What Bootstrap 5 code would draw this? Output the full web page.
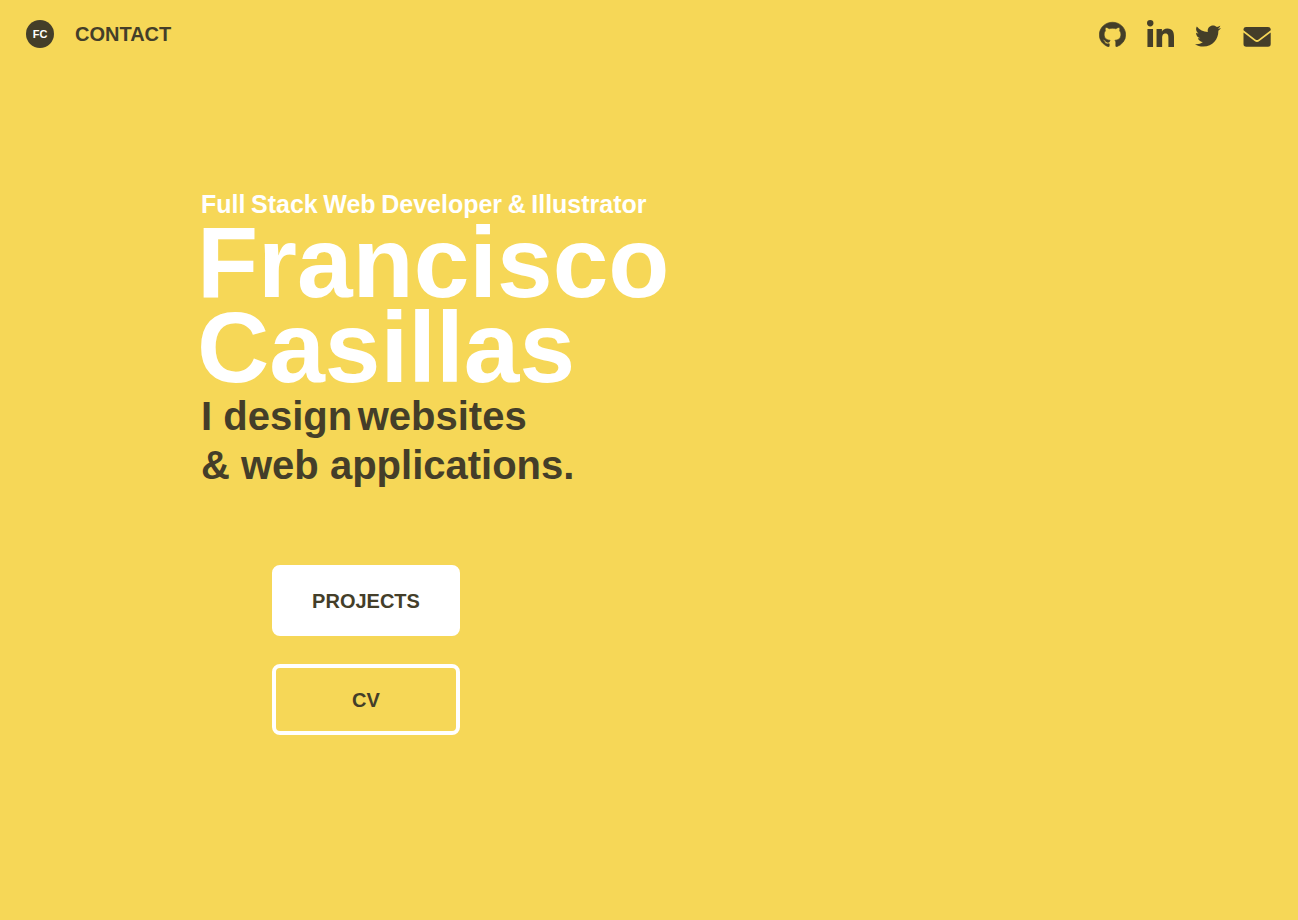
<!DOCTYPE html>
<html lang="en">
<head>
<meta charset="utf-8">
<meta name="viewport" content="width=device-width, initial-scale=1">
<title>Francisco Casillas</title>
<link href="https://cdn.jsdelivr.net/npm/bootstrap@5.3.0/dist/css/bootstrap.min.css" rel="stylesheet">
<style>
  :root { --sun: #f6d757; --ink: #443e29; }
  body { background: var(--sun); color: var(--ink); font-family: "Liberation Sans", Arial, sans-serif; font-weight: 700; }
  a { color: var(--ink); }
  .topbar { padding: 20px 26px; }
  .monogram { width: 28px; height: 28px; background: var(--ink); font-size: 11px; line-height: 28px; }
  .contact-link { font-size: 20px; line-height: 28px; margin-left: 21px; }
  .social { gap: 21px; height: 27px; padding-right: 1px; }
  .social svg { display: block; fill: currentColor; }
  .hero { padding: 121px 24px 40px 201px; }
  .role { font-size: 25px; line-height: 30px; }
  .hero-name { font-size: 100px; line-height: 85px; margin: 1px 0 2px -4px; }
  .pitch { font-size: 40px; line-height: 49px; }
  .thin-gap { font-size: 20px; line-height: 20px; }
  .actions { width: 188px; gap: 28px; margin: 75px 0 0 71px; }
  .actions .btn { --bs-btn-color: var(--ink); --bs-btn-border-color: #fff; --bs-btn-hover-border-color: #fff; --bs-btn-hover-bg: #fff; border-width: 4px; border-radius: 8px; font-size: 20px; font-weight: 700; line-height: 31px; padding: 17px 0 15px; }
  @media (max-width: 767px) {
    .hero { padding: 60px 24px; }
    .hero-name { font-size: 60px; line-height: 56px; }
    .pitch { font-size: 28px; line-height: 36px; }
    .actions { margin-left: 0; }
  }
</style>
</head>
<body>
<header class="topbar d-flex justify-content-between align-items-start">
  <nav class="d-flex align-items-center" aria-label="Main">
    <a href="#home" class="monogram rounded-circle text-white text-center text-decoration-none">FC</a>
    <a href="#contact" class="contact-link text-decoration-none">CONTACT</a>
  </nav>
  <div class="social d-flex align-items-end">
    <a href="#github" aria-label="GitHub"><svg width="27" height="26" viewBox="-.2 -.8 16.4 16.6" preserveAspectRatio="none"><path stroke="currentColor" stroke-width=".4" d="M8 0C3.58 0 0 3.58 0 8c0 3.54 2.29 6.53 5.47 7.59.4.07.55-.17.55-.38 0-.19-.01-.82-.01-1.49-2.01.37-2.53-.49-2.69-.94-.09-.23-.48-.94-.82-1.13-.28-.15-.68-.52-.01-.53.63-.01 1.08.58 1.23.82.72 1.21 1.87.87 2.33.66.07-.52.28-.87.51-1.07-1.78-.2-3.64-.89-3.64-3.95 0-.87.31-1.59.82-2.15-.08-.2-.36-1.02.08-2.12 0 0 .67-.21 2.2.82.64-.18 1.32-.27 2-.27s1.36.09 2 .27c1.53-1.04 2.2-.82 2.2-.82.44 1.1.16 1.92.08 2.12.51.56.82 1.27.82 2.15 0 3.07-1.87 3.75-3.65 3.95.29.25.54.73.54 1.48 0 1.07-.01 1.93-.01 2.2 0 .21.15.46.55.38A8.01 8.01 0 0 0 16 8c0-4.42-3.58-8-8-8z"/></svg></a>
    <a href="#linkedin" aria-label="LinkedIn"><svg width="27" height="27" viewBox="0 0 448 448"><path d="M100.28 448H7.4V148.9h92.88zM53.79 108.1C24.09 108.1 0 83.5 0 53.8a53.79 53.79 0 0 1 107.58 0c0 29.7-24.1 54.3-53.79 54.3zM447.9 448h-92.68V302.4c0-34.7-.7-79.2-48.29-79.2-48.29 0-55.69 37.7-55.69 76.7V448h-92.78V148.9h89.08v40.8h1.3c12.4-23.5 42.69-48.3 87.88-48.3 94 0 111.28 61.9 111.28 142.3V448z"/></svg></a>
    <a href="#twitter" aria-label="Twitter"><svg width="26" height="22" viewBox="0 48 512 416"><path d="M459.37 151.716c.325 4.548.325 9.097.325 13.645 0 138.72-105.583 298.558-298.558 298.558-59.452 0-114.68-17.219-161.137-47.106 8.447.974 16.568 1.299 25.34 1.299 49.055 0 94.213-16.568 130.274-44.832-46.132-.975-84.792-31.188-98.112-72.772 6.498.974 12.995 1.624 19.818 1.624 9.421 0 18.843-1.3 27.614-3.573-48.081-9.747-84.143-51.98-84.143-102.985v-1.299c13.969 7.797 30.214 12.67 47.431 13.319-28.264-18.843-46.781-51.005-46.781-87.391 0-19.492 5.197-37.36 14.294-52.954 51.655 63.675 129.3 105.258 216.365 109.807-1.624-7.797-2.599-15.918-2.599-24.04 0-57.828 46.782-104.934 104.934-104.934 30.213 0 57.502 12.67 76.67 33.137 23.715-4.548 46.456-13.32 66.599-25.34-7.798 24.366-24.366 44.833-46.132 57.827 21.117-2.273 41.584-8.122 60.426-16.243-14.292 20.791-32.161 39.308-52.628 54.253z"/></svg></a>
    <a href="#email" aria-label="Email"><svg width="29" height="21" viewBox="-1 0 29 21"><path d="M3 1h22q2.400 0 2.700 2v1.200L15.600 13.400Q14 14.600 12.400 13.400L.5 4.200V3Q.8 1 3 1zM.5 6.400L11.600 15Q14 16.800 16.400 15L27.700 6.400V18Q27.700 20.700 25 20.700H3.200Q.5 20.700 .5 18z"/></svg></a>
  </div>
</header>
<main class="hero">
  <p class="role text-white mb-0">Full<span class="thin-gap"> </span>Stack<span class="thin-gap"> </span>Web<span class="thin-gap"> </span>Developer<span class="thin-gap"> </span>&amp;<span class="thin-gap"> </span>Illustrator</p>
  <h1 class="hero-name fw-bold text-white">Francisco<br>Casillas</h1>
  <p class="pitch mb-0">I design<span class="thin-gap"> </span>websites<br>&amp; web applications.</p>
  <div class="actions d-flex flex-column">
    <button type="button" class="btn bg-white">PROJECTS</button>
    <button type="button" class="btn">CV</button>
  </div>
</main>
<script src="https://cdn.jsdelivr.net/npm/bootstrap@5.3.0/dist/js/bootstrap.bundle.min.js"></script>
</body>
</html>
